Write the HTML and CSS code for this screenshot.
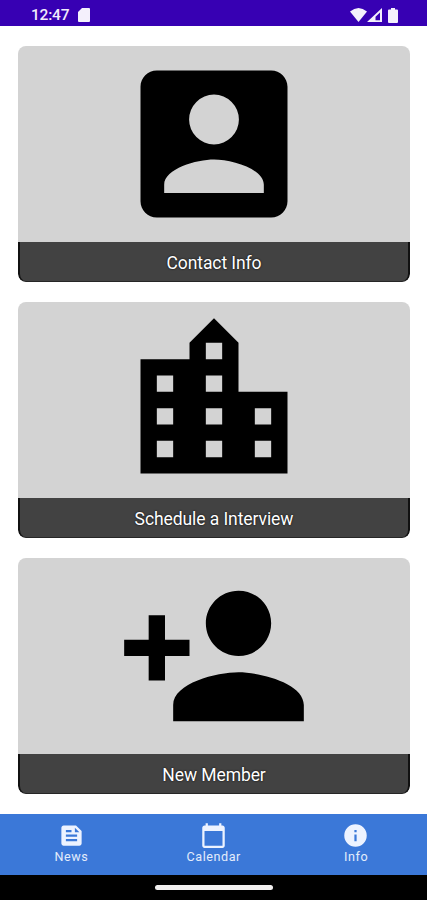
FILE: index.html
```html
<!DOCTYPE html>
<html lang="en">
<head>
    <meta charset="UTF-8">
    <meta name="viewport" content="width=device-width, initial-scale=1.0">
    <title>Info</title>
    <link rel="stylesheet" href="styles.css">
</head>
<body>
    <header class="status-bar">
        <span class="time">12:47</span>
        <svg class="sd-card" viewBox="0 0 12 14"><path d="M4 0h7a1 1 0 0 1 1 1v12a1 1 0 0 1-1 1H1a1 1 0 0 1-1-1V4z"/></svg>
        <div class="status-icons">
            <svg class="wifi" viewBox="0 0 17 14"><path d="M0 3.500Q8.500-3.500 17 3.500L8.500 14z"/></svg>
            <svg class="signal" viewBox="0 0 15 14"><path fill-rule="evenodd" d="M15 0v14H0zM13 4.500L8.500 8.800V12.300H13z"/></svg>
            <svg class="battery" viewBox="0 0 10 15"><path d="M3 0h4v1.500h2a1 1 0 0 1 1 1V14a1 1 0 0 1-1 1H1a1 1 0 0 1-1-1V2.500a1 1 0 0 1 1-1h2z"/></svg>
        </div>
    </header>

    <main class="cards">
        <a class="card">
            <svg class="card-icon" viewBox="0 0 24 24"><path fill-rule="evenodd" d="M3 5v14c0 1.100.89 2 2 2h14c1.100 0 2-.9 2-2V5c0-1.100-.9-2-2-2H5c-1.110 0-2 .9-2 2zM15.050 9a3.050 3.050 0 1 1-6.100 0 3.050 3.050 0 0 1 6.100 0zM5.900 17c0-2 4-3.100 6.100-3.100s6.100 1.100 6.100 3.100v1H5.900z"/></svg>
            <div class="card-label">Contact Info</div>
        </a>
        <a class="card">
            <svg class="card-icon" viewBox="0 0 24 24"><path fill-rule="evenodd" d="M15 11V5l-3-3-3 3v2H3v14h18V11zM5 9h2v2H5zM5 13h2v2H5zM5 17h2v2H5zM11 5h2v2h-2zM11 9h2v2h-2zM11 13h2v2h-2zM11 17h2v2h-2zM17 13h2v2h-2zM17 17h2v2h-2z"/></svg>
            <div class="card-label">Schedule a Interview</div>
        </a>
        <a class="card">
            <svg class="card-icon" viewBox="0 0 24 24"><path d="M15 12c2.210 0 4-1.790 4-4s-1.790-4-4-4-4 1.790-4 4 1.790 4 4 4zM6 10V7H4v3H1v2h3v3h2v-3h3v-2zM15 14c-2.670 0-8 1.340-8 4v2h16v-2c0-2.660-5.330-4-8-4z"/></svg>
            <div class="card-label">New Member</div>
        </a>
    </main>

    <nav class="tab-bar">
        <a class="tab">
            <svg class="tab-icon" viewBox="0 0 24 24"><path fill-rule="evenodd" d="M16 3H5c-1.100 0-2 .9-2 2v14c0 1.100.9 2 2 2h14c1.100 0 2-.9 2-2V8zM7 7h5v2H7zM17 17H7v-2h10zM17 13H7v-2h10zM15 9V5l4 4z"/></svg>
            News
        </a>
        <a class="tab">
            <svg class="tab-icon" viewBox="0 0 24 24"><path fill-rule="evenodd" d="M20 3h-1V1h-2v2H7V1H5v2H4c-1.100 0-2 .9-2 2v16c0 1.100.9 2 2 2h16c1.100 0 2-.9 2-2V5c0-1.100-.9-2-2-2zM20 21H4V8h16z"/></svg>
            Calendar
        </a>
        <a class="tab">
            <svg class="tab-icon" viewBox="0 0 24 24"><path fill-rule="evenodd" d="M12 2a10 10 0 1 0 0 20 10 10 0 0 0 0-20zM13 17h-2v-6h2zM13 9h-2V7h2z"/></svg>
            Info
        </a>
    </nav>

    <div class="gesture-bar"><span class="gesture-handle"></span></div>
</body>
</html>
```
FILE: styles.css
```css
* {
    box-sizing: border-box;
}
body {
    margin: 0;
    height: 900px;
    display: flex;
    flex-direction: column;
    overflow: hidden;
    background: #fff;
    font-family: Roboto, Arial, sans-serif;
}
.status-bar {
    height: 26px;
    padding: 4px 29px 0 31px;
    display: flex;
    align-items: center;
    background: #3700b3;
    color: #f1ebfb;
    fill: #f4f0fc;
}
.time {
    width: 47px;
    font-size: 15.5px;
    font-weight: 500;
    line-height: 22px;
    letter-spacing: -0.2px;
}
.sd-card {
    width: 12px;
    height: 14px;
}
.status-icons {
    margin-left: auto;
    display: flex;
    align-items: center;
}
.wifi {
    width: 17px;
    height: 14px;
}
.signal {
    width: 15px;
    height: 14px;
    margin-right: 6px;
}
.battery {
    width: 10px;
    height: 15px;
}
.cards {
    height: 788px;
    padding: 20px 17px 0 18px;
    display: flex;
    flex-direction: column;
    gap: 20px;
}
.card {
    height: 236px;
    display: flex;
    flex-direction: column;
    align-items: center;
    border-radius: 8px;
    overflow: hidden;
    background: #d3d3d3;
}
.card-icon {
    width: 196px;
    height: 196px;
    flex: none;
}
.card-label {
    width: 100%;
    height: 40px;
    padding-top: 3px;
    border: solid #111;
    border-width: 0 2px 1px;
    border-bottom-color: #262626;
    border-radius: 0 0 8px 8px;
    background: #424242;
    color: #fff;
    font-size: 17.5px;
    line-height: 36px;
    letter-spacing: -0.08px;
    text-align: center;
    text-shadow: 0 0 2px #000;
}
.tab-bar {
    height: 61px;
    padding-top: 8px;
    display: flex;
    background: #3b78d8;
    color: #e3ecfb;
    fill: #edf3ff;
}
.tab {
    flex: 1;
    display: flex;
    flex-direction: column;
    align-items: center;
    font-size: 12.6px;
    line-height: 16px;
    letter-spacing: 0.55px;
    text-indent: 0.5px;
}
.tab-icon {
    width: 27px;
    height: 27px;
}
.gesture-bar {
    height: 25px;
    display: flex;
    align-items: center;
    justify-content: center;
    background: #000;
}
.gesture-handle {
    width: 118px;
    height: 5px;
    border-radius: 3px;
    background: #f1efef;
}
```
